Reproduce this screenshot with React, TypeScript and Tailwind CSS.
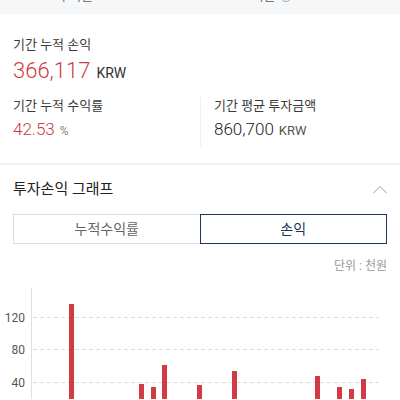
import React from "react";

const bars: [number, number][] = [
  [69, 305],
  [139, 385],
  [151, 388],
  [162, 366],
  [197, 386],
  [232, 372],
  [315, 377],
  [337, 388],
  [349, 390],
  [361, 380],
];

export default function App() {
  return (
    <div
      className="w-[400px] h-[400px] overflow-hidden bg-white text-[#222]"
      style={{ fontFamily: 'Roboto, "Noto Sans CJK KR", "Noto Sans", sans-serif' }}
    >
      {/* top band */}
      <div className="h-[14px] bg-[#f6f7f9] overflow-hidden">
        <div className="-mt-[13px] pl-[42px] flex items-center gap-[4px] text-[13px] leading-[18px] text-[#777]">
          <span>조회 기간 : 2023.01.01 ~ 2023.12.31 기준</span>
          <span className="inline-block w-[12px] h-[12px] rounded-full border border-[#aaa]" />
        </div>
      </div>

      {/* summary */}
      <div className="px-[13px] pt-[22px]">
        <div className="text-[13px] leading-[18px] text-[#3a3a3a]">기간 누적 손익</div>
        <div className="mt-[3px] flex items-baseline gap-[6px] leading-[28px]">
          <span className="text-[22px] font-light text-[#cf3a42]">366,117</span>
          <span className="text-[14px] text-[#333]">KRW</span>
        </div>

        <div className="mt-[10px] flex">
          <div className="w-[187px]">
            <div className="text-[13px] leading-[18px] text-[#3a3a3a]">기간 누적 수익률</div>
            <div className="mt-[2px] flex items-baseline gap-[5px] leading-[24px]">
              <span className="text-[17px] font-light text-[#cf3a42]">42.53</span>
              <span className="text-[12px] text-[#888]">%</span>
            </div>
          </div>
          <div className="flex-1 border-l border-[#eeeeee] pl-[13px] pb-[3px]">
            <div className="text-[13px] leading-[18px] text-[#3a3a3a]">기간 평균 투자금액</div>
            <div className="mt-[2px] flex items-baseline gap-[5px] leading-[24px]">
              <span className="text-[17px] font-light text-[#222]">860,700</span>
              <span className="text-[13px] text-[#555]">KRW</span>
            </div>
          </div>
        </div>
      </div>

      <div className="mt-[17px] h-[2px] bg-[#f0f0f0]" />

      {/* graph section */}
      <div className="px-[13px] pt-[13px]">
        <div className="flex items-center justify-between">
          <div className="text-[15px] leading-[22px] text-[#222]">투자손익 그래프</div>
          <svg width="14" height="9" viewBox="0 0 14 9">
            <path d="M0.5 8 L7 1.5 L13.5 8" fill="none" stroke="#9a9a9a" strokeWidth="1" />
          </svg>
        </div>

        <div className="mt-[14px] flex h-[30px]">
          <div className="flex-1 flex items-center justify-center border border-[#dddddd] border-r-0 text-[14px] text-[#666]">
            누적수익률
          </div>
          <div className="flex-1 flex items-center justify-center border border-[#1e3560] text-[14px] text-[#1e3560]">
            손익
          </div>
        </div>

        <div className="mt-[14px] text-right text-[12px] leading-[16px] text-[#999]">단위 : 천원</div>
      </div>

      <svg width="400" height="125" viewBox="0 275 400 125" className="block">
        <line x1="31.5" y1="289" x2="31.5" y2="400" stroke="#e0e0e0" strokeWidth="1" />
        {[318.5, 350.5, 383.5].map((y) => (
          <line
            key={y}
            x1="33"
            y1={y}
            x2="379"
            y2={y}
            stroke="#dcdcdc"
            strokeWidth="1"
            strokeDasharray="4 3"
          />
        ))}
        <text x="25" y="322.5" textAnchor="end" fontSize="12" fill="#555" fontFamily="Roboto, sans-serif">120</text>
        <text x="25" y="354.5" textAnchor="end" fontSize="12" fill="#555" fontFamily="Roboto, sans-serif">80</text>
        <text x="25" y="387.5" textAnchor="end" fontSize="12" fill="#555" fontFamily="Roboto, sans-serif">40</text>
        {bars.map(([x, top]) => (
          <rect key={x} x={x} y={top} width="5" height={420 - top} fill="#d23a44" />
        ))}
      </svg>
    </div>
  );
}
